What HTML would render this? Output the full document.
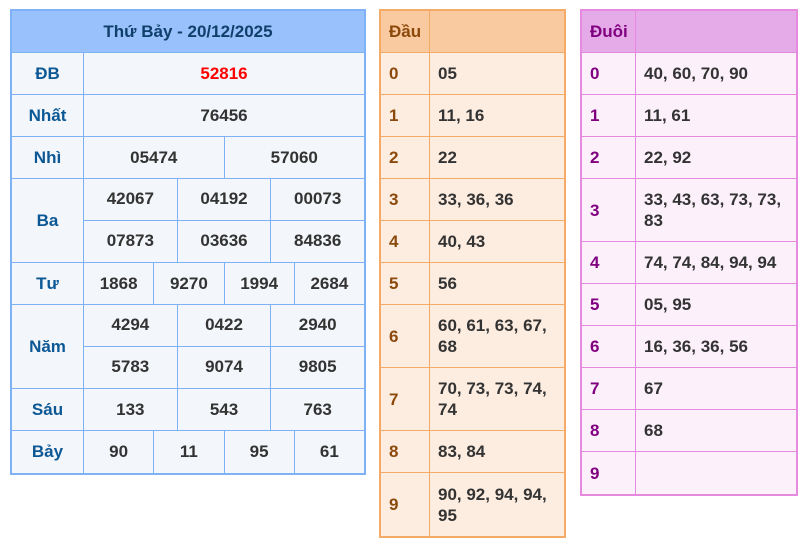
<!DOCTYPE html>
<html><head><meta charset="utf-8"><style>
*{box-sizing:border-box;margin:0;padding:0}
body{width:807px;height:551px;background:#fff;font-family:"Liberation Sans",Arial,sans-serif;font-weight:bold;font-size:17px;color:#333;position:relative;overflow:hidden}
.box{position:absolute;top:9px;border:2px solid}
.r{display:flex;height:42px;border-bottom:1px solid}
.r:last-child{border-bottom:none}
.c{display:flex;align-items:center;justify-content:center;border-left:1px solid;flex:1}
.c:first-child{border-left:none}
#L{left:10px;width:356px;border-color:#7fb2f5;background:#f3f6fa}
#L .r,#L .c,#L .g{border-color:#7fb2f5}
#L .h{background:#99c1fb;color:#0f3f6b;justify-content:center;align-items:center;display:flex;height:42px;border-bottom:1px solid #7fb2f5}
#L .lab{flex:0 0 71px;color:#0c5895}
.grp{display:flex;height:84px;border-bottom:1px solid #7fb2f5}
.grp .lab{display:flex;align-items:center;justify-content:center}
.sub{flex:1;border-left:1px solid #7fb2f5;display:flex;flex-direction:column}
.sub .r{height:42px}
.t .c{justify-content:flex-start;padding-left:8px;line-height:21px}
.t .c.d{flex:0 0 auto;padding-left:8px}
#M{left:379px;width:187px;border-color:#f5ab68;background:#fdede1}
#M .r,#M .c{border-color:#f5ab68}
#M .d{width:48px;color:#8b4a0b}
#M .hd{background:#f9caa0;color:#5a2c07}
#R{left:580px;width:218px;border-color:#e68ae0;background:#fcf0fb}
#R .r,#R .c{border-color:#e68ae0}
#R .d{width:53px;color:#800080}
#R .hd{background:#e4abe8;color:#5a2c07}
.tall{height:63px !important}
</style></head><body>
<div class="box" id="L">
<div class="h">Thứ Bảy - 20/12/2025</div>
<div class="r"><div class="c lab">ĐB</div><div class="c" style="color:#f00">52816</div></div>
<div class="r"><div class="c lab">Nhất</div><div class="c">76456</div></div>
<div class="r"><div class="c lab">Nhì</div><div class="c">05474</div><div class="c">57060</div></div>
<div class="grp"><div class="lab">Ba</div><div class="sub">
<div class="r"><div class="c">42067</div><div class="c">04192</div><div class="c">00073</div></div>
<div class="r"><div class="c">07873</div><div class="c">03636</div><div class="c">84836</div></div></div></div>
<div class="r"><div class="c lab">Tư</div><div class="c">1868</div><div class="c">9270</div><div class="c">1994</div><div class="c">2684</div></div>
<div class="grp"><div class="lab">Năm</div><div class="sub">
<div class="r"><div class="c">4294</div><div class="c">0422</div><div class="c">2940</div></div>
<div class="r"><div class="c">5783</div><div class="c">9074</div><div class="c">9805</div></div></div></div>
<div class="r"><div class="c lab">Sáu</div><div class="c">133</div><div class="c">543</div><div class="c">763</div></div>
<div class="r"><div class="c lab">Bảy</div><div class="c">90</div><div class="c">11</div><div class="c">95</div><div class="c">61</div></div>
</div>

<div class="box t" id="M">
<div class="r hd"><div class="c d">Đầu</div><div class="c"></div></div>
<div class="r"><div class="c d">0</div><div class="c">05</div></div>
<div class="r"><div class="c d">1</div><div class="c">11, 16</div></div>
<div class="r"><div class="c d">2</div><div class="c">22</div></div>
<div class="r"><div class="c d">3</div><div class="c">33, 36, 36</div></div>
<div class="r"><div class="c d">4</div><div class="c">40, 43</div></div>
<div class="r"><div class="c d">5</div><div class="c">56</div></div>
<div class="r tall"><div class="c d">6</div><div class="c">60, 61, 63, 67,<br>68</div></div>
<div class="r tall"><div class="c d">7</div><div class="c">70, 73, 73, 74,<br>74</div></div>
<div class="r"><div class="c d">8</div><div class="c">83, 84</div></div>
<div class="r tall"><div class="c d">9</div><div class="c">90, 92, 94, 94,<br>95</div></div>
</div>

<div class="box t" id="R">
<div class="r hd"><div class="c d">Đuôi</div><div class="c"></div></div>
<div class="r"><div class="c d">0</div><div class="c">40, 60, 70, 90</div></div>
<div class="r"><div class="c d">1</div><div class="c">11, 61</div></div>
<div class="r"><div class="c d">2</div><div class="c">22, 92</div></div>
<div class="r tall"><div class="c d">3</div><div class="c">33, 43, 63, 73, 73,<br>83</div></div>
<div class="r"><div class="c d">4</div><div class="c">74, 74, 84, 94, 94</div></div>
<div class="r"><div class="c d">5</div><div class="c">05, 95</div></div>
<div class="r"><div class="c d">6</div><div class="c">16, 36, 36, 56</div></div>
<div class="r"><div class="c d">7</div><div class="c">67</div></div>
<div class="r"><div class="c d">8</div><div class="c">68</div></div>
<div class="r"><div class="c d">9</div><div class="c"></div></div>
</div>
</body></html>
